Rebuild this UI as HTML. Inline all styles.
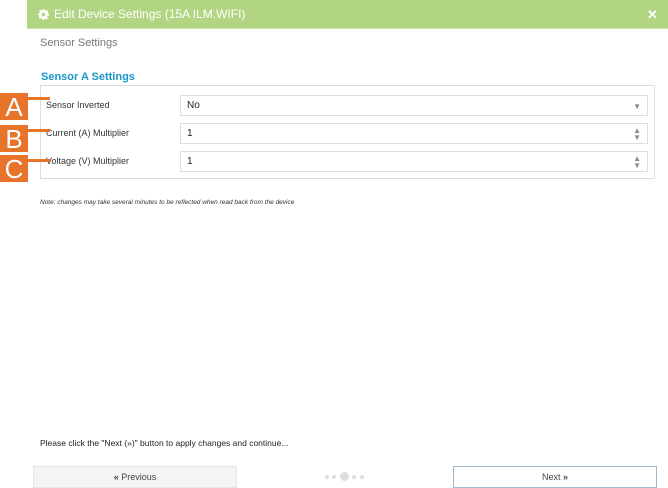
<!DOCTYPE html>
<html><head><style>
body{margin:0;width:668px;height:488px;background:#fff;font-family:"Liberation Sans",sans-serif;position:relative;overflow:hidden}
.abs{position:absolute}
.hdr{left:27px;top:0;width:641px;height:28px;background:#b2d583;border-bottom:1px solid #c9e3a8;color:#fff;font-size:12px;line-height:29px}
.inp{left:180px;width:466px;height:19px;border:1px solid #ddd;font-size:10px;line-height:19px;text-indent:6px;color:#222}
.lab{left:46px;font-size:9px;color:#333}
.box{left:0;width:28px;height:27px;background:#e8742c;color:#fff;font-size:26px;line-height:28px;text-align:center}
.line{left:27px;width:23px;height:3px;background:#e8742c}
.arr{color:#888;font-size:8px;line-height:7px;text-indent:0}
.btn{top:466px;width:204px;height:22px;font-size:9px;color:#444;line-height:21px;text-align:center;box-sizing:border-box}
</style></head><body>
<div class="abs hdr"><svg class="abs" style="left:11px;top:9px" width="11" height="11" viewBox="0 0 12 12"><path fill="#fff" d="M5 0h2l.3 1.6 1.2.5 1.4-.9 1.4 1.4-.9 1.4.5 1.2L12 5v2l-1.6.3-.5 1.2.9 1.4-1.4 1.4-1.4-.9-1.2.5L7 12H5l-.3-1.6-1.2-.5-1.4.9-1.4-1.4.9-1.4-.5-1.2L0 7V5l1.6-.3.5-1.2-.9-1.4 1.4-1.4 1.4.9 1.2-.5z"/><circle cx="6" cy="6" r="2" fill="#b2d583"/></svg><span class="abs" style="left:27px">Edit Device Settings (15A ILM.WIFI)</span><span class="abs" style="left:620px;font-weight:bold;font-size:13px">✕</span></div>
<div class="abs" style="left:40px;top:37px;font-size:11px;color:#777">Sensor Settings</div>
<div class="abs" style="left:41px;top:71px;font-size:11px;font-weight:bold;color:#1a96c5">Sensor A Settings</div>
<div class="abs" style="left:40px;top:85px;width:613px;height:92px;border:1px solid #ddd"></div>
<div class="abs lab" style="top:100px">Sensor Inverted</div>
<div class="abs lab" style="top:128px">Current (A) Multiplier</div>
<div class="abs lab" style="top:156px">Voltage (V) Multiplier</div>
<div class="abs inp" style="top:95px">No<span class="abs arr" style="top:7px;right:6px">▼</span></div>
<div class="abs inp" style="top:123px">1<span class="abs arr" style="top:3px;right:6px">▲<br>▼</span></div>
<div class="abs inp" style="top:151px">1<span class="abs arr" style="top:3px;right:6px">▲<br>▼</span></div>
<div class="abs line" style="top:97px"></div>
<div class="abs line" style="top:129px"></div>
<div class="abs line" style="top:159px"></div>
<div class="abs box" style="top:93px">A</div>
<div class="abs box" style="top:125px">B</div>
<div class="abs box" style="top:155px">C</div>
<div class="abs" style="left:40px;top:199px;font-size:6.5px;font-style:italic;color:#333">Note: changes may take several minutes to be reflected when read back from the device</div>
<div class="abs" style="left:40px;top:438px;font-size:8.5px;color:#222">Please click the "Next (»)" button to apply changes and continue...</div>
<div class="abs btn" style="left:33px;background:#f4f4f4;border:1px solid #e6e6e6"><b>«</b> Previous</div>
<div class="abs btn" style="left:453px;border:1px solid #9bbbd6">Next <b>»</b></div>
<div class="abs" style="left:325px;top:475px;width:4px;height:4px;border-radius:50%;background:#ddd"></div>
<div class="abs" style="left:332px;top:475px;width:4px;height:4px;border-radius:50%;background:#ddd"></div>
<div class="abs" style="left:340px;top:472px;width:9px;height:9px;border-radius:50%;background:#ddd"></div>
<div class="abs" style="left:352px;top:475px;width:4px;height:4px;border-radius:50%;background:#ddd"></div>
<div class="abs" style="left:360px;top:475px;width:4px;height:4px;border-radius:50%;background:#ddd"></div>
</body></html>
